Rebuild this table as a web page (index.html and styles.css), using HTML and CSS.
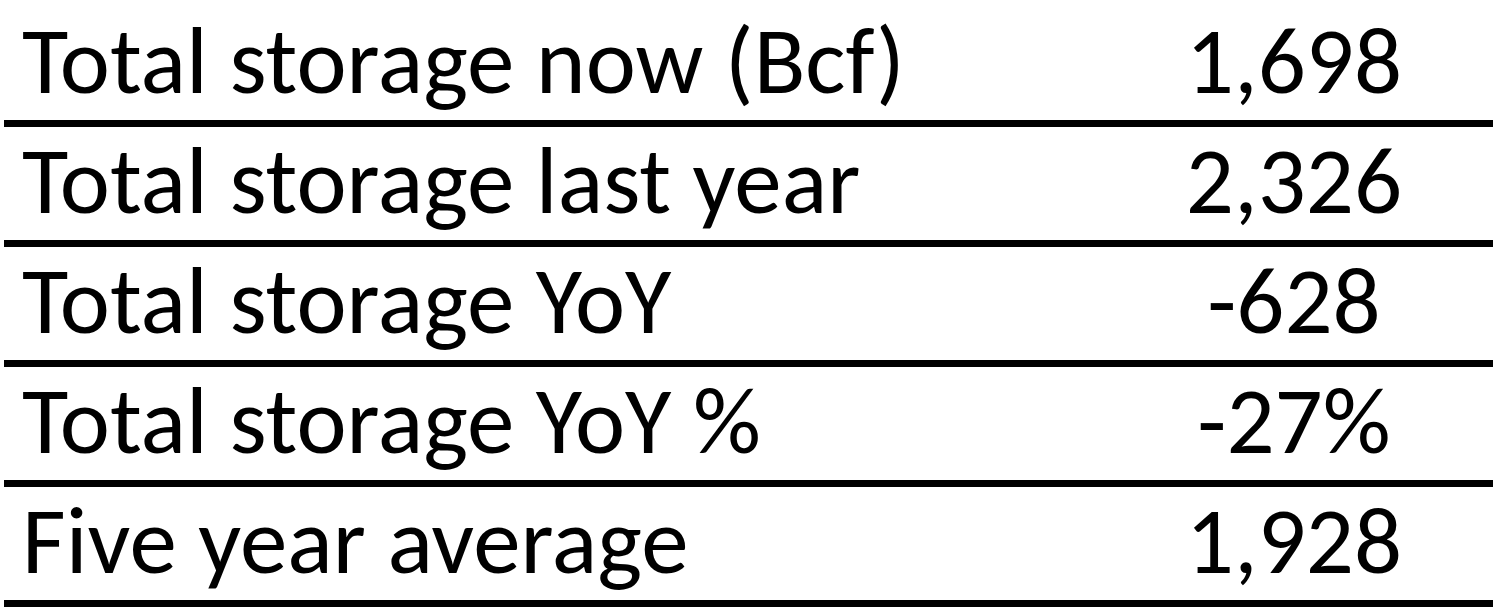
FILE: index.html
```html
<!DOCTYPE html>
<html lang="en">
<head>
    <meta charset="UTF-8">
    <meta name="viewport" content="width=device-width, initial-scale=1.0">
    <title>Storage</title>
    <link rel="stylesheet" href="styles.css">
</head>
<body>
    <table class="storage">
        <tr>
            <td class="label">Total storage now (Bcf)</td>
            <td class="value">1,698</td>
        </tr>
        <tr>
            <td class="label">Total storage last year</td>
            <td class="value">2,326</td>
        </tr>
        <tr>
            <td class="label">Total storage YoY</td>
            <td class="value">-628</td>
        </tr>
        <tr>
            <td class="label">Total storage YoY %</td>
            <td class="value">-27%</td>
        </tr>
        <tr>
            <td class="label">Five year average</td>
            <td class="value">1,928</td>
        </tr>
    </table>
</body>
</html>
```

FILE: styles.css
```css
body {
    margin: 0;
    padding: 7px 0 0 4px;
    background: #fff;
    color: #000;
    font-family: Carlito, 'Open Sans', sans-serif;
}

.storage {
    width: 1489px;
    border-collapse: collapse;
}

.storage td {
    height: 113px;
    padding: 0;
    border-bottom: 7px solid #000;
    font-size: 95px;
    line-height: 109px;
    vertical-align: top;
    white-space: nowrap;
}

.storage .label {
    padding-left: 18px;
    text-align: left;
}

.storage .value {
    width: 398px;
    text-align: center;
}
```
